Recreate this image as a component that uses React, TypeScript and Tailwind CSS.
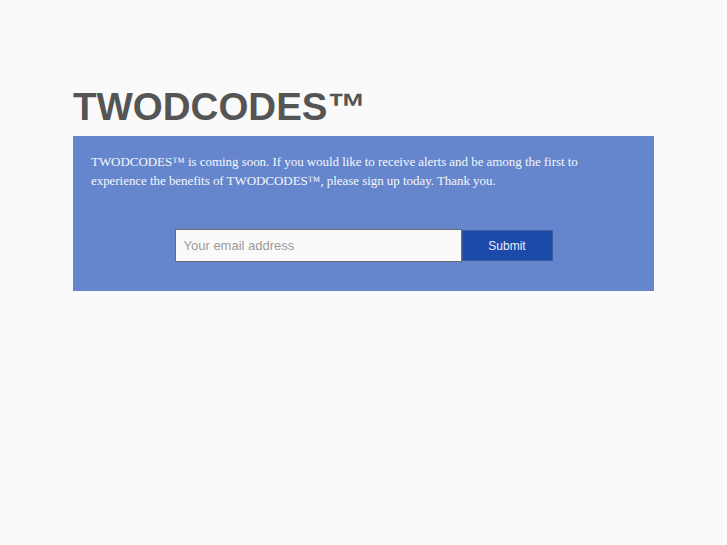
import React from 'react';

export default function App() {
  return (
    <div className="min-h-[545px] bg-[#fafafa] pt-[88px]">
      <div className="mx-auto w-[581px]">
        {/* Heading */}
        <h1 className="mb-[10px] text-[38.5px] font-bold leading-[38px] text-[#555555] [font-family:'Liberation_Sans',Arial,sans-serif]">
          TWODCODES™
        </h1>

        {/* Signup box */}
        <div className="bg-[#6586cc] px-[18px] pt-[16px] pb-[29px]">
          <p className="text-[13px] leading-[19px] tracking-[-0.05px] text-[#f4f6fb] [font-family:'Liberation_Serif','Times_New_Roman',serif]">
            TWODCODES™ is coming soon. If you would like to receive alerts and be among the first to
            experience the benefits of TWODCODES™, please sign up today. Thank you.
          </p>

          <form className="mt-[39px] flex items-center justify-center" onSubmit={(e) => e.preventDefault()}>
            <input
              type="email"
              placeholder="Your email address"
              className="h-[33px] w-[287px] border border-[#6b6b6b] bg-[#fafafa] px-[8px] text-[13px] text-[#333] outline-none placeholder:text-[#9a9a9a] [font-family:'Liberation_Sans',Arial,sans-serif]"
            />
            <button
              type="submit"
              className="h-[31px] w-[91px] border border-[#3d5c9c] bg-[#1b4aab] text-[12px] text-[#e8eefa] [font-family:'Liberation_Sans',Arial,sans-serif]"
            >
              Submit
            </button>
          </form>
        </div>
      </div>
    </div>
  );
}
